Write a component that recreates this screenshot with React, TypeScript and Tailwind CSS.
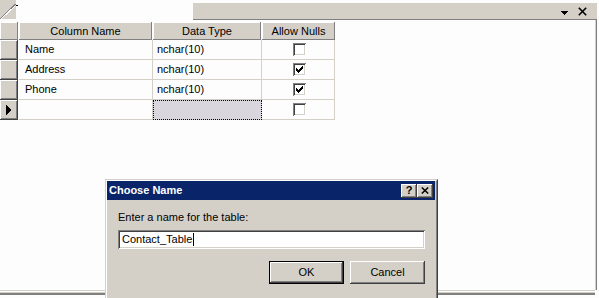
import React from "react";

const raised = "bg-[#d4d0c8] shadow-[inset_-1px_-1px_#808080,inset_1px_1px_#ffffff]";
const raised2 =
  "bg-[#d4d0c8] shadow-[inset_-1px_-1px_#404040,inset_1px_1px_#ffffff,inset_-2px_-2px_#808080,inset_2px_2px_#d4d0c8]";
const sunken =
  "bg-white shadow-[inset_1px_1px_#808080,inset_-1px_-1px_#ffffff,inset_2px_2px_#404040,inset_-2px_-2px_#d4d0c8]";

function Check() {
  const cols = [2, 3, 4, 3, 2, 1, 0];
  return (
    <svg width="7" height="7" viewBox="0 0 7 7" shapeRendering="crispEdges">
      {cols.map((y, x) => (
        <rect key={x} x={x} y={y} width="1" height="3" fill="#000" />
      ))}
    </svg>
  );
}

function CheckBox({ checked }: { checked: boolean }) {
  return (
    <div className={`w-[13px] h-[13px] ${sunken} flex items-center justify-center`}>
      {checked ? <Check /> : null}
    </div>
  );
}

type Row = { name: string; type: string; nulls: boolean; current?: boolean };

const rows: Row[] = [
  { name: "Name", type: "nchar(10)", nulls: false },
  { name: "Address", type: "nchar(10)", nulls: true },
  { name: "Phone", type: "nchar(10)", nulls: true },
  { name: "", type: "", nulls: false, current: true },
];

export default function App() {
  return (
    <div className="relative w-[599px] h-[298px] overflow-hidden bg-[#fcfdfc] font-['Liberation_Sans',Arial,sans-serif] text-[11px] text-black">
      <div className="w-[597px] h-[295px] flex flex-col">
        {/* tab strip */}
        <div className="flex h-[20px] shrink-0">
          <div className="w-[16px] h-[19px] bg-[#d4d0c8]">
            <svg width="16" height="19" viewBox="0 0 16 19" shapeRendering="crispEdges">
              <line x1="0.5" y1="18.5" x2="15.5" y2="4" stroke="#808080" strokeWidth="1" />
              <line x1="1.5" y1="18.5" x2="15.5" y2="5.5" stroke="#ffffff" strokeWidth="1" />
            </svg>
          </div>
          <div className="w-[177px] relative">
            <div className="absolute left-0 top-[5px] w-[2px] h-px bg-black" />
          </div>
          <div className="flex-1 flex flex-col">
            <div className="h-[3px]" />
            <div className="flex-1 bg-[#d4d0c8] border-b border-[#808080] flex items-center justify-end pr-[10px] gap-[10px]">
              <svg width="7" height="4" viewBox="0 0 7 4" className="mt-[3px]" shapeRendering="crispEdges">
                <path d="M0 0 H7 L3.5 4 Z" fill="#000" />
              </svg>
              <svg width="9" height="9" viewBox="0 0 9 9" className="mt-[1px]">
                <path d="M0.8 0.8 L8.2 8.2 M8.2 0.8 L0.8 8.2" stroke="#000" strokeWidth="1.6" />
              </svg>
            </div>
          </div>
        </div>

        {/* main area */}
        <div className="flex-1 border-r border-[#808080]">
          <div className="h-full border-r border-[#d4d0c8] pt-[2px]">
            {/* header */}
            <div className="flex h-[18px]">
              <div className={`w-[18px] h-full ${raised}`} />
              <div className="w-px" />
              <div className={`w-[133px] h-full ${raised} flex items-center justify-center`}>Column Name</div>
              <div className="w-px" />
              <div className={`w-[108px] h-full ${raised} flex items-center justify-center`}>Data Type</div>
              <div className="w-px" />
              <div className={`w-[73px] h-full ${raised} flex items-center justify-center`}>Allow Nulls</div>
            </div>
            {rows.map((r, i) => (
              <div key={i} className="flex h-[20px]">
                <div className={`w-[18px] h-full ${raised2} flex items-center pl-[6px]`}>
                  {r.current ? (
                    <svg width="5" height="10" viewBox="0 0 5 10" shapeRendering="crispEdges">
                      <path d="M0 0 L5 5 L0 10 Z" fill="#000" />
                    </svg>
                  ) : null}
                </div>
                <div className="w-px" />
                <div className="w-[134px] h-full border-r border-b border-[#d4d0c8] pl-[6px] flex items-center">
                  {r.name}
                </div>
                {r.current ? (
                  <div className="w-[109px] h-full border border-dotted border-black bg-[#dad6de]" />
                ) : (
                  <div className="w-[109px] h-full border-r border-b border-[#d4d0c8] pl-[4px] flex items-center">
                    {r.type}
                  </div>
                )}
                <div className="w-[73px] h-full border-r border-b border-[#d4d0c8] flex items-center justify-center pl-[2px]">
                  <CheckBox checked={r.nulls} />
                </div>
              </div>
            ))}
          </div>
        </div>

        {/* bottom lines */}
        <div className="h-px bg-[#d4d0c8] w-[595px]" />
        <div className="h-px" />
        <div className="h-px bg-[#d4d0c8] w-[595px]" />
        <div className="h-[2px] bg-[#808080] w-[595px]" />
      </div>

      {/* dialog */}
      <div className="absolute left-[105px] top-[179px] w-[333px] h-[130px] border-l border-t border-[#d4d0c8] border-r border-r-[#404040] bg-[#d4d0c8]">
        <div className="h-full border-l border-t border-white border-r border-r-[#808080] pr-px flex flex-col">
          <div className="h-[19px] bg-[#0a246a] flex items-center pl-[2px] pr-[2px]">
            <span className="font-bold text-white leading-none flex-1">Choose Name</span>
            <div className={`w-[16px] h-[14px] ${raised2} flex items-center justify-center font-bold text-[11px] leading-none pb-px`}>
              ?
            </div>
            <div className={`w-[16px] h-[14px] ${raised2} flex items-center justify-center`}>
              <svg width="8" height="7" viewBox="0 0 8 7">
                <path d="M0.8 0.5 L7.2 6.5 M7.2 0.5 L0.8 6.5" stroke="#000" strokeWidth="1.5" />
              </svg>
            </div>
          </div>
          <div className="pl-[11px] pt-[11px]">
            <div className="h-[13px] leading-[13px]">Enter a name for the table:</div>
            <div className={`mt-[6px] w-[307px] h-[19px] ${sunken} flex items-center pl-[4px]`}>
              <span>Contact_Table</span>
              <span className="w-px h-[13px] bg-black ml-px" />
            </div>
            <div className="mt-[12px] w-[307px] flex justify-end gap-[6px]">
              <div className="w-[75px] h-[23px] border border-black">
                <div className={`w-full h-full ${raised2} flex items-center justify-center`}>OK</div>
              </div>
              <div className={`w-[75px] h-[23px] ${raised2} flex items-center justify-center`}>Cancel</div>
            </div>
          </div>
        </div>
      </div>
    </div>
  );
}
